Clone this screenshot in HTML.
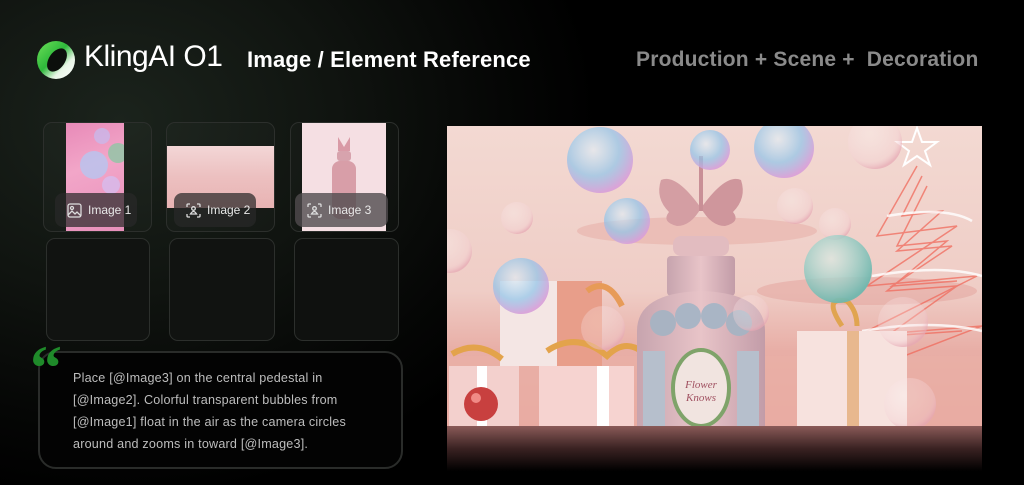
<!DOCTYPE html>
<html><head><meta charset="utf-8"><style>
*{margin:0;padding:0;box-sizing:border-box}
body{width:1024px;height:485px;overflow:hidden;background:#000;font-family:"Liberation Sans",sans-serif;position:relative}
.bg{position:absolute;inset:0;background:radial-gradient(ellipse 480px 380px at 120px 120px,#1b231c 0%,#101410 45%,#050605 80%,#000 100%)}
.abs{position:absolute}
.box{position:absolute;border:1px solid #2c2f2c;border-radius:9px;background:rgba(255,255,255,0.02)}
.lbl{position:absolute;height:34px;border-radius:8px;background:rgba(40,40,40,0.72);color:#e8e8e8;font-size:12px;display:flex;align-items:center;padding-left:12px;gap:6px}
.q{position:absolute;left:38px;top:351px;width:365px;height:118px;border:2px solid #2a2c2a;border-radius:18px;background:#030303}
.qt{position:absolute;left:73px;top:367px;color:#bdbdbd;font-size:12.6px;line-height:22px;letter-spacing:0.2px}
</style></head><body>
<div class="bg"></div>
<svg class="abs" style="left:34px;top:39px" width="44" height="42" viewBox="0 0 44 42">
<defs><linearGradient id="lg" x1="0" y1="0" x2="1" y2="1"><stop offset="0" stop-color="#6ee05a"/><stop offset="0.45" stop-color="#2db83a"/><stop offset="0.7" stop-color="#e8f5e6"/><stop offset="1" stop-color="#fff"/></linearGradient></defs>
<circle cx="22" cy="21" r="19" fill="url(#lg)"/>
<ellipse cx="23" cy="21" rx="8" ry="13" transform="rotate(35 23 21)" fill="#0c0f0c"/>
</svg>
<div class="abs" style="left:84px;top:40px;color:#fff;font-size:30px;letter-spacing:-0.5px">KlingAI O1</div>
<div class="abs" style="left:247px;top:47px;color:#fff;font-size:22px;font-weight:bold;letter-spacing:0.15px">Image / Element Reference</div>
<div class="abs" style="left:636px;top:48px;color:#8a8a8a;font-size:21px;font-weight:bold;white-space:pre;letter-spacing:0.2px">Production + Scene +  Decoration</div>

<div class="box" style="left:43px;top:122px;width:109px;height:110px"></div>
<div class="abs" style="left:66px;top:123px;width:58px;height:108px;background:linear-gradient(160deg,#e88ab8,#f2a6c8 40%,#e890bb)"></div>
<svg class="abs" style="left:66px;top:123px" width="58" height="108"><circle cx="36" cy="13" r="8" fill="#c9b8ea" opacity=".8"/><circle cx="28" cy="42" r="14" fill="#b7c6f0" opacity=".8"/><circle cx="52" cy="30" r="10" fill="#7fcca0" opacity=".7"/><circle cx="45" cy="62" r="9" fill="#d3c0f3" opacity=".7"/></svg>
<div class="box" style="left:166px;top:122px;width:109px;height:110px"></div>
<div class="abs" style="left:167px;top:146px;width:107px;height:62px;background:linear-gradient(180deg,#f3d6d6,#ecc0c0 50%,#e8b3b3)"></div>
<div class="box" style="left:290px;top:122px;width:109px;height:110px"></div>
<div class="abs" style="left:302px;top:123px;width:84px;height:108px;background:#f5dfe3"></div>
<svg class="abs" style="left:302px;top:123px" width="84" height="108"><path d="M36 14 l6 10 l6-10 l0 14 l-12 0z" fill="#d99aa6"/><rect x="35" y="28" width="14" height="10" rx="3" fill="#d7a3ad"/><rect x="30" y="38" width="24" height="58" rx="8" fill="#d89ea8"/></svg>
<div class="lbl" style="left:55px;top:193px;width:82px"><svg width="15" height="15" viewBox="0 0 15 15" fill="none" stroke="#ddd" stroke-width="1.3"><rect x="1" y="1" width="13" height="13" rx="2"/><circle cx="5" cy="5" r="1.5"/><path d="M1 12 l4-4 l3 3 l2-2 l4 4"/></svg>Image 1</div>
<div class="lbl" style="left:174px;top:193px;width:82px"><svg width="15" height="15" viewBox="0 0 15 15" fill="none" stroke="#ddd" stroke-width="1.3"><path d="M4 1 H2 a1 1 0 0 0 -1 1 V4 M11 1 h2 a1 1 0 0 1 1 1 V4 M1 11 v2 a1 1 0 0 0 1 1 H4 M14 11 v2 a1 1 0 0 1 -1 1 H11"/><circle cx="7.5" cy="5.5" r="1.8"/><path d="M4.5 11 q3-5 6 0z"/></svg>Image 2</div>
<div class="lbl" style="left:295px;top:193px;width:93px;background:rgba(80,75,78,0.8)"><svg width="15" height="15" viewBox="0 0 15 15" fill="none" stroke="#ddd" stroke-width="1.3"><path d="M4 1 H2 a1 1 0 0 0 -1 1 V4 M11 1 h2 a1 1 0 0 1 1 1 V4 M1 11 v2 a1 1 0 0 0 1 1 H4 M14 11 v2 a1 1 0 0 1 -1 1 H11"/><circle cx="7.5" cy="5.5" r="1.8"/><path d="M4.5 11 q3-5 6 0z"/></svg>Image 3</div>

<div class="box" style="left:46px;top:238px;width:104px;height:103px;background:#111311"></div>
<div class="box" style="left:169px;top:238px;width:106px;height:103px;background:#111311"></div>
<div class="box" style="left:294px;top:238px;width:105px;height:103px;background:#0f110f"></div>

<div class="q"></div>
<div class="abs" style="left:30px;top:336px;color:#1f8a2a;font-size:64px;font-family:'Liberation Serif',serif;font-weight:bold;line-height:64px">&ldquo;</div>
<div class="qt">Place [@Image3] on the central pedestal in<br>[@Image2]. Colorful transparent bubbles from<br>[@Image1] float in the air as the camera circles<br>around and zooms in toward [@Image3].</div>

<svg class="abs" style="left:447px;top:126px" width="535" height="345" viewBox="0 0 535 345">
<defs>
<linearGradient id="sky" x1="0" y1="0" x2="0" y2="1"><stop offset="0" stop-color="#f3d9d2"/><stop offset=".55" stop-color="#efcdc6"/><stop offset=".75" stop-color="#e8aea6"/><stop offset="1" stop-color="#e9a49c"/></linearGradient>
<radialGradient id="bb" cx=".4" cy=".35" r=".65"><stop offset="0" stop-color="#dff0fa" stop-opacity=".6"/><stop offset=".6" stop-color="#8fc4ea" stop-opacity=".7"/><stop offset="1" stop-color="#d79fd9" stop-opacity=".9"/></radialGradient>
<radialGradient id="bc" cx=".4" cy=".35" r=".65"><stop offset="0" stop-color="#fff" stop-opacity=".25"/><stop offset=".8" stop-color="#f4d2d6" stop-opacity=".35"/><stop offset="1" stop-color="#e6a8b4" stop-opacity=".7"/></radialGradient>
<radialGradient id="bt" cx=".4" cy=".35" r=".65"><stop offset="0" stop-color="#d6efe8" stop-opacity=".6"/><stop offset="1" stop-color="#6fb7ae" stop-opacity=".95"/></radialGradient>
<linearGradient id="refl" x1="0" y1="0" x2="0" y2="1"><stop offset="0" stop-color="#8a5a58"/><stop offset=".5" stop-color="#3a2222"/><stop offset="1" stop-color="#000"/></linearGradient>
<linearGradient id="bot" x1="0" y1="0" x2="1" y2="0"><stop offset="0" stop-color="#c7a4ae"/><stop offset=".5" stop-color="#e8c4c8"/><stop offset="1" stop-color="#c29ca8"/></linearGradient>
</defs>
<rect width="535" height="300" fill="url(#sky)"/>
<ellipse cx="250" cy="105" rx="120" ry="14" fill="#e7b1aa" opacity=".6"/>
<ellipse cx="420" cy="165" rx="110" ry="14" fill="#e4a9a2" opacity=".6"/>
<rect y="230" width="535" height="70" fill="#eab0a7" opacity=".6"/>
<g stroke="#f06a5c" stroke-width="1.5" fill="none" opacity=".75">
<path d="M470 40 L430 110 L510 100 L420 160 L530 150 L410 210 L535 200 L405 250"/>
<path d="M475 50 l-20 40 l40-5 l-45 40 l55-5 l-60 40 l65-5"/>
<path d="M480 60 l-30 60 l50-5 l-60 50 l70-5 l-70 50 l75-5"/>
</g>
<path d="M470 2 l5 14 h15 l-12 9 l5 14 l-13-9 l-13 9 l5-14 l-12-9 h15z" fill="none" stroke="#fff" stroke-width="2"/>
<path d="M440 90 q60-10 85 5 M425 150 q70-12 110 0 M415 205 q70-12 120 0" stroke="#fff" stroke-width="2.5" fill="none" opacity=".8"/>
<rect x="53" y="155" width="60" height="85" fill="#f4e6e4"/><rect x="110" y="155" width="45" height="85" fill="#e89e8a"/>
<rect x="2" y="240" width="70" height="60" fill="#f3d0cd"/><rect x="30" y="240" width="10" height="60" fill="#fff"/>
<rect x="92" y="240" width="95" height="60" fill="#f6d3d0"/><rect x="150" y="240" width="12" height="60" fill="#fff"/>
<rect x="350" y="205" width="110" height="95" fill="#f7e2de"/><rect x="400" y="205" width="12" height="95" fill="#e8b88e"/>
<path d="M5 228 q25-15 50 5 M100 225 q30-20 60 5 q20-20 40 0" stroke="#e3a34b" stroke-width="6" fill="none"/>
<path d="M140 165 q20-15 35 15" stroke="#e79b58" stroke-width="6" fill="none"/>
<path d="M395 200 q-20-30 5-25 q10 10 10 25" stroke="#e0a450" stroke-width="5" fill="none"/>
<circle cx="34" cy="278" r="17" fill="#c8403f"/><circle cx="29" cy="272" r="5" fill="#f08a86"/>
<path d="M254 82 q-25-35-40-28 q-6 18 8 32 q-8 10 8 14 q14 0 24-18z" fill="#d49ea3"/>
<path d="M254 82 q25-35 40-28 q6 18-8 32 q8 10-8 14 q-14 0-24-18z" fill="#cf969c"/>
<rect x="252" y="30" width="4" height="55" fill="#c98f96"/>
<rect x="226" y="110" width="56" height="20" rx="8" fill="#e2bcc0"/>
<rect x="220" y="130" width="68" height="40" rx="4" fill="url(#bot)"/>
<path d="M190 205 q0-38 64-40 q64 2 64 40 v95 h-128z" fill="url(#bot)"/>
<circle cx="216" cy="197" r="13" fill="#a8b3c2"/><circle cx="241" cy="190" r="13" fill="#a9b5c5"/><circle cx="267" cy="190" r="13" fill="#a9b5c5"/><circle cx="292" cy="197" r="13" fill="#a8b3c2"/>
<rect x="196" y="225" width="22" height="75" fill="#b6bfcc"/><rect x="290" y="225" width="22" height="75" fill="#b6bfcc"/>
<ellipse cx="254" cy="262" rx="28" ry="38" fill="#f1e4e0" stroke="#7fa36a" stroke-width="4"/>
<text x="254" y="262" font-family="Liberation Serif" font-style="italic" font-size="11" fill="#a05060" text-anchor="middle">Flower</text>
<text x="254" y="275" font-family="Liberation Serif" font-style="italic" font-size="11" fill="#a05060" text-anchor="middle">Knows</text>
<circle cx="153" cy="34" r="33" fill="url(#bb)"/>
<circle cx="263" cy="24" r="20" fill="url(#bb)"/>
<circle cx="337" cy="22" r="30" fill="url(#bb)"/>
<circle cx="428" cy="16" r="27" fill="url(#bc)"/>
<circle cx="70" cy="92" r="16" fill="url(#bc)"/>
<circle cx="180" cy="95" r="23" fill="url(#bb)"/>
<circle cx="3" cy="125" r="22" fill="url(#bc)"/>
<circle cx="74" cy="160" r="28" fill="url(#bb)"/>
<circle cx="348" cy="80" r="18" fill="url(#bc)"/>
<circle cx="388" cy="98" r="16" fill="url(#bc)"/>
<circle cx="391" cy="143" r="34" fill="url(#bt)"/>
<circle cx="304" cy="187" r="18" fill="url(#bc)"/>
<circle cx="156" cy="202" r="22" fill="url(#bc)"/>
<circle cx="456" cy="196" r="25" fill="url(#bc)"/>
<circle cx="463" cy="278" r="26" fill="url(#bc)"/>
<rect y="300" width="535" height="45" fill="url(#refl)"/>
</svg>
</body></html>
